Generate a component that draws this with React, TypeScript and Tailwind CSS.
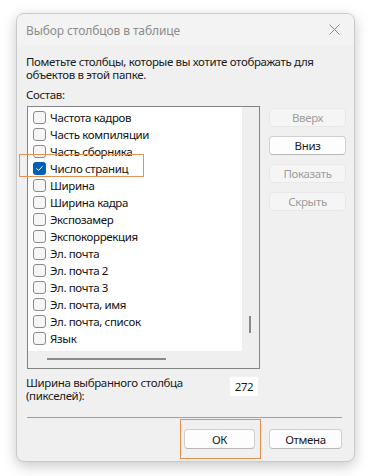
import React from "react";

const items = [
  "Частота кадров",
  "Часть компиляции",
  "Часть сборника",
  "Число страниц",
  "Ширина",
  "Ширина кадра",
  "Экспозамер",
  "Экспокоррекция",
  "Эл. почта",
  "Эл. почта 2",
  "Эл. почта 3",
  "Эл. почта, имя",
  "Эл. почта, список",
  "Язык",
];

function Check({ checked }: { checked?: boolean }) {
  if (checked) {
    return (
      <span className="flex h-[13px] w-[13px] shrink-0 items-center justify-center rounded-[3px] bg-[#005fb8]">
        <svg width="9" height="9" viewBox="0 0 9 9" fill="none">
          <path d="M1.8 4.8 L3.6 6.4 L7.2 2.6" stroke="white" strokeWidth="1" strokeLinecap="round" strokeLinejoin="round" />
        </svg>
      </span>
    );
  }
  return <span className="block h-[13px] w-[13px] shrink-0 rounded-[3px] border border-[#8a8a8a] bg-[#f6f6f6]" />;
}

function SideButton({ label, enabled }: { label: string; enabled?: boolean }) {
  return (
    <div
      className={
        enabled
          ? "flex h-[19px] w-[77px] items-center justify-center rounded-[4px] border border-[#d0d0d0] border-b-[#b8b8b8] bg-[#fdfdfd] text-[#1a1a1a]"
          : "flex h-[19px] w-[77px] items-center justify-center rounded-[4px] border border-[#e8e8e8] bg-[#f5f5f5] text-[#9d9d9d]"
      }
    >
      {label}
    </div>
  );
}

export default function App() {
  return (
    <div
      className="relative h-[476px] w-[368px] overflow-hidden bg-white pl-[16px] pt-[13px] text-[11.5px] leading-[13px] tracking-[-0.35px] text-[#1a1a1a]"
      style={{ fontFamily: '"Noto Sans", "Open Sans", sans-serif' }}
    >
      <div className="relative flex h-[449px] w-[339px] flex-col overflow-hidden rounded-[8px] border border-[#c9c9c9] bg-[#f0f0f0] shadow-[0_4px_14px_rgba(0,0,0,0.22)]">
        {/* title bar */}
        <div className="flex h-[31px] shrink-0 items-center justify-between bg-[#f3f3f3] pl-[9px] pr-[10px] pt-[1px]">
          <span className="text-[12px] tracking-[-0.1px] text-[#8c8c8c]">Выбор столбцов в таблице</span>
          <svg width="11" height="11" viewBox="0 0 11 11" className="mr-[4px] mt-[-2px]">
            <path d="M0.5 0.5 L10.5 10.5 M10.5 0.5 L0.5 10.5" stroke="#8a8a8a" strokeWidth="1" />
          </svg>
        </div>

        {/* body */}
        <div className="flex flex-col pl-[9px] pr-[12px] pt-[10px]">
          <p className="whitespace-nowrap">
            Пометьте столбцы, которые вы хотите отображать для
            <br />
            объектов в этой папке.
          </p>
          <p className="mt-[7px]">Состав:</p>

          <div className="mt-[5px] flex">
            {/* list */}
            <div className="ml-[1px] flex h-[263px] w-[233px] shrink-0 flex-col border border-[#838383]">
              <div className="flex h-[244px]">
                <div className="flex w-[214px] flex-col overflow-hidden bg-white pt-[2px]">
                  {items.map((t, i) => (
                    <div key={t} className="flex h-[17px] shrink-0 items-center pl-[5px]">
                      <Check checked={i === 3} />
                      <span className="ml-[4px] text-[#111]">{t}</span>
                    </div>
                  ))}
                </div>
                <div className="flex w-[17px] flex-col items-center bg-[#efefef] pt-[209px]">
                  <div className="ml-[-2px] h-[17px] w-[2px] bg-[#8a8a8a]" />
                </div>
              </div>
              <div className="flex h-[17px] bg-[#efefef]">
                <div className="ml-[19px] mt-[7px] h-[2px] w-[119px] bg-[#8a8a8a]" />
              </div>
            </div>

            {/* side buttons */}
            <div className="ml-[9px] mt-[2px] flex flex-col gap-[9px]">
              <SideButton label="Вверх" />
              <SideButton label="Вниз" enabled />
              <SideButton label="Показать" />
              <SideButton label="Скрыть" />
            </div>
          </div>

          <div className="mt-[7px] flex items-start">
            <p className="whitespace-nowrap">
              Ширина выбранного столбца
              <br />
              (пикселей):
            </p>
            <div className="ml-auto mr-[84px] mt-[1px] flex h-[19px] w-[28px] items-center justify-center bg-white">
              272
            </div>
          </div>

          <div className="ml-[1px] mt-[15px] h-px w-[315px] bg-[#a0a0a0]" />

          <div className="mt-[11px] flex justify-end gap-[14px]">
            <div className="flex h-[20px] w-[71px] items-center justify-center rounded-[4px] border border-[#d0d0d0] border-b-[#b8b8b8] bg-[#fdfdfd]">
              ОК
            </div>
            <div className="flex h-[20px] w-[73px] items-center justify-center rounded-[4px] border border-[#d0d0d0] border-b-[#b8b8b8] bg-[#fdfdfd]">
              Отмена
            </div>
          </div>
        </div>
      </div>

      {/* highlight overlays */}
      <div className="pointer-events-none absolute left-[19px] top-[154px] h-[23px] w-[125px] border border-[#e8904f]" />
      <div className="pointer-events-none absolute left-[180px] top-[419px] h-[40px] w-[81px] border border-[#e8904f]" />
    </div>
  );
}
